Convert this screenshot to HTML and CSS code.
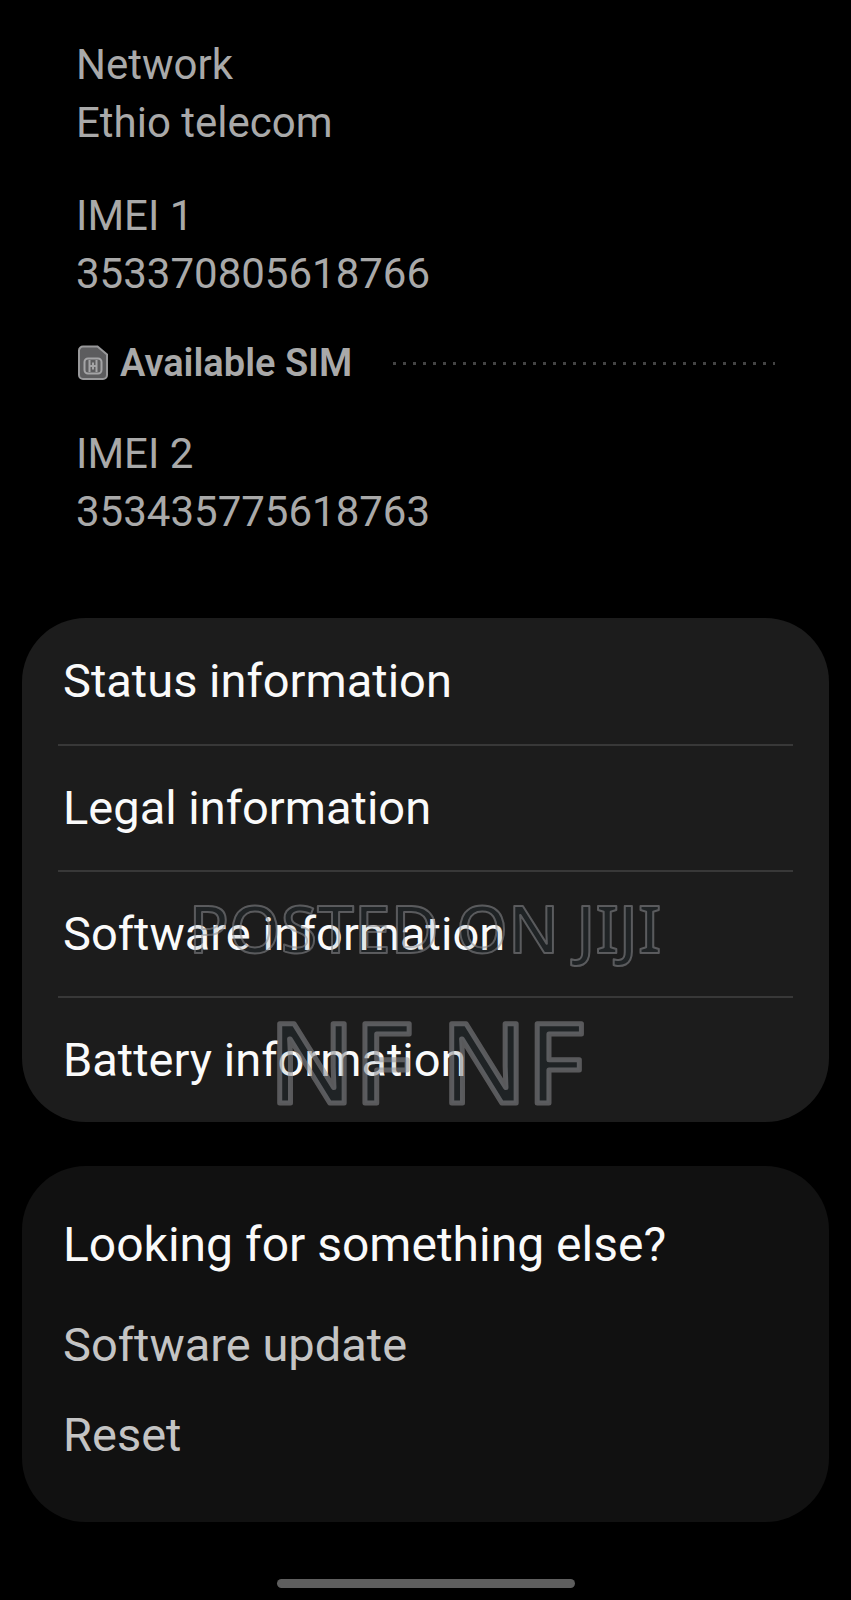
FILE: index.html
```
<!DOCTYPE html>
<html lang="en">
<head>
    <meta charset="utf-8">
    <meta name="viewport" content="width=device-width, initial-scale=1">
    <title>About phone</title>
    <link rel="stylesheet" href="styles.css">
</head>
<body>
    <main class="page">
        <section class="details">
            <dl class="detail">
                <dt>Network</dt>
                <dd>Ethio telecom</dd>
            </dl>
            <dl class="detail">
                <dt>IMEI 1</dt>
                <dd>353370805618766</dd>
            </dl>

            <div class="sim-header">
                <svg class="sim-icon" viewBox="0 0 32 36" aria-hidden="true">
                    <path d="M7 1.500h14.500L31 9.500V30a4 4 0 0 1-4 4H7a4 4 0 0 1-4-4V5.500a4 4 0 0 1 4-4z" fill="#5c5c5e" stroke="#98989a" stroke-width="2"/>
                    <rect x="8.500" y="13.500" width="17" height="15" rx="3.500" fill="#5c5c5e" stroke="#a4a4a6" stroke-width="2"/>
                    <path d="M13.500 15v12M20.500 15v12M13.500 21h7M17 17.500v7" fill="none" stroke="#a4a4a6" stroke-width="2"/>
                </svg>
                <h2>Available SIM</h2>
                <span class="dots"></span>
            </div>

            <dl class="detail">
                <dt>IMEI 2</dt>
                <dd>353435775618763</dd>
            </dl>
        </section>

        <nav class="card menu">
            <a href="#status">Status information</a>
            <a href="#legal">Legal information</a>
            <a href="#software">Software information</a>
            <a href="#battery">Battery information</a>
            <svg class="watermark" viewBox="0 0 500 240">
                <text class="posted" x="249" y="71">POSTED ON JIJI</text>
                <text class="seller" x="251" y="221">NF NF</text>
            </svg>
        </nav>

        <section class="card more">
            <h2>Looking for something else?</h2>
            <a href="#update">Software update</a>
            <a href="#reset">Reset</a>
        </section>

        <div class="home-bar"></div>
    </main>
</body>
</html>
```
FILE: styles.css
```
* {
    box-sizing: border-box;
}
body {
    margin: 0;
    background: #000;
    color: #fafafa;
    font-family: Roboto, sans-serif;
}
h2, dl, dd {
    margin: 0;
}
a {
    color: inherit;
    text-decoration: none;
}
.page {
    padding: 36px 22px 12px;
}

/* network and IMEI block */
.details {
    display: flex;
    flex-direction: column;
    gap: 35px;
    padding: 0 54px;
    margin-bottom: 77px;
    color: #a9a9a9;
}
.detail {
    font-size: 42px;
    line-height: 58px;
}
.sim-header {
    display: flex;
    align-items: center;
    padding-bottom: 2px;
    line-height: 50px;
}
.sim-icon {
    width: 32px;
    height: 36px;
    margin-right: 12px;
}
.sim-header h2 {
    font-size: 38px;
    font-weight: 600;
}
.dots {
    flex: 1;
    height: 3px;
    margin-left: 41px;
    background: repeating-linear-gradient(90deg, #444 0 3px, transparent 3px 10px);
}

/* cards */
.card {
    display: flex;
    flex-direction: column;
    border-radius: 64px;
}
.menu {
    position: relative;
    padding: 0 36px;
    margin-bottom: 44px;
    background: #1c1c1c;
    font-size: 47px;
}
.menu a {
    padding: 0 5px;
    line-height: 126px;
}
.menu a + a {
    border-top: 2px solid #383838;
    line-height: 124px;
}
.more {
    padding: 50px 41px 42px;
    margin-bottom: 57px;
    background: #111;
    font-size: 47px;
    line-height: 90px;
}
.more h2 {
    padding-bottom: 26px;
    font-size: 48px;
    font-weight: 400;
    line-height: 58px;
}
.more a {
    color: #c4c4c4;
}

/* outlined text lying over the list */
.watermark {
    position: absolute;
    bottom: 0;
    left: 50%;
    width: 500px;
    height: 240px;
    margin-left: -250px;
    overflow: visible;
    font-family: "Noto Sans", sans-serif;
    font-weight: 500;
    text-anchor: middle;
    fill: rgba(60, 90, 110, 0.12);
    stroke: rgba(140, 140, 144, 0.55);
    stroke-linejoin: round;
    pointer-events: none;
}
.posted {
    font-size: 66px;
    stroke-width: 2px;
}
.seller {
    font-size: 110px;
    stroke-width: 5px;
}

.home-bar {
    width: 35%;
    max-width: 298px;
    min-width: 298px;
    height: 9px;
    margin: 0 auto;
    border-radius: 5px;
    background: #5e5e5e;
}
```
